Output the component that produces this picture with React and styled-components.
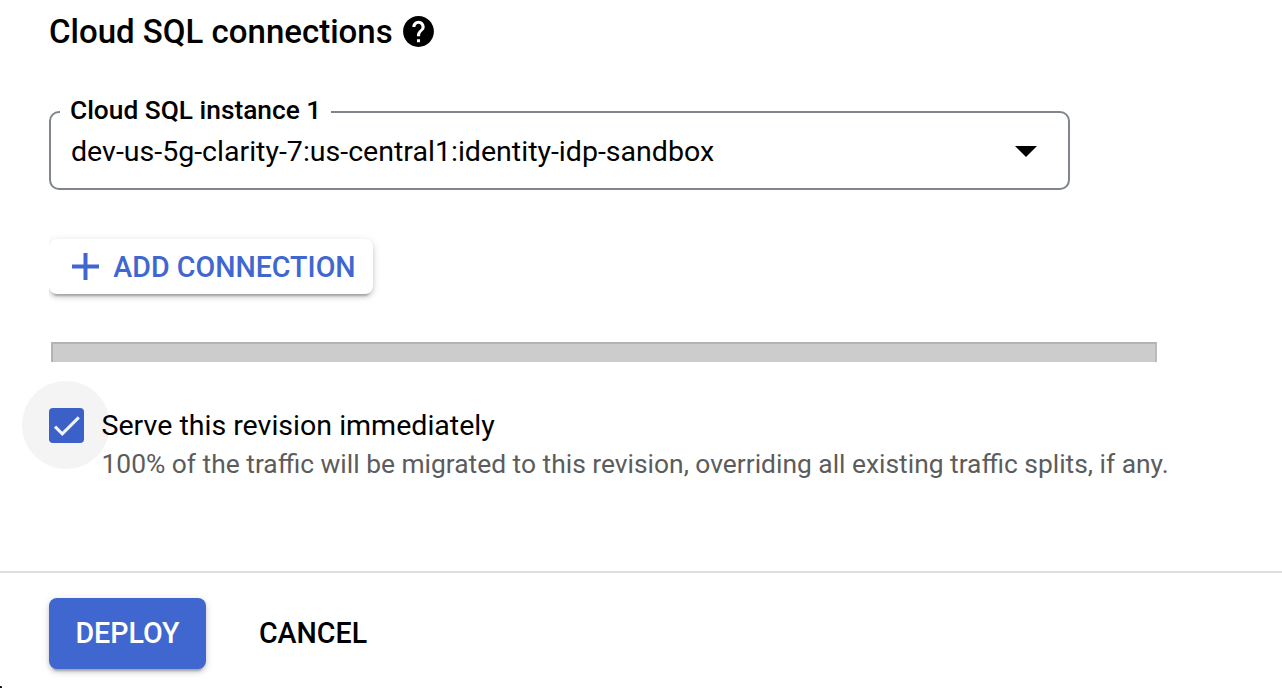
import React from "react";
import styled, { createGlobalStyle } from "styled-components";
import { MdHelp } from "react-icons/md";

const GlobalStyle = createGlobalStyle`
  *, *::before, *::after { box-sizing: border-box; }
  body {
    margin: 0;
    background: #fff;
    color: #000;
    font-family: Roboto, "Liberation Sans", sans-serif;
    overflow: hidden;
  }
  button { font-family: inherit; cursor: pointer; }
`;

const Page = styled.div`
  position: relative;
  display: flex;
  flex-direction: column;
  height: 688px;
  overflow: hidden;
`;

const Content = styled.main`
  flex: 1;
  display: flex;
  flex-direction: column;
  align-items: flex-start;
  padding: 12px 49px 0;
`;

const Heading = styled.h2`
  display: flex;
  align-items: center;
  gap: 7px;
  height: 40px;
  margin: 0;
  font-size: 33px;
  font-weight: 500;
  line-height: 40px;
  white-space: nowrap;
`;

const HelpIcon = styled(MdHelp)`
  width: 37px;
  height: 37px;
  margin-bottom: 1px;
`;

const SelectField = styled.fieldset`
  display: flex;
  align-items: center;
  justify-content: space-between;
  width: 1021px;
  height: 95px;
  min-width: 0;
  margin: 43px 0 0;
  padding: 0 31px 0 20px;
  border: 2px solid #80868b;
  border-radius: 10px;
`;

const FieldLabel = styled.legend`
  margin-left: -11px;
  padding: 0 10px 4px;
  font-size: 26.3px;
  font-weight: 500;
  line-height: 30px;
  white-space: nowrap;
`;

const FieldValue = styled.span`
  padding-top: 5px;
  font-size: 28.55px;
  line-height: 36px;
  white-space: nowrap;
`;

const Caret = styled.span`
  margin-top: 3px;
  border: 11px solid transparent;
  border-top-color: #000;
  border-bottom: 0;
`;

const ShadowClip = styled.div`
  overflow: hidden;
  margin-top: 39px;
  padding: 10px 12px 12px 0;
`;

const Button = styled.button`
  display: flex;
  align-items: center;
  justify-content: center;
  width: ${(p) => p.$width}px;
  height: ${(p) => p.$height}px;
  padding: ${(p) => p.$padding || "0 0 1px"};
  border: 0;
  border-radius: 8px;
  background: ${(p) => p.$background || "transparent"};
  box-shadow: ${(p) =>
    p.$raised
      ? "0 6px 2px -4px rgba(0,0,0,.2), 0 3px 4px rgba(0,0,0,.14), 0 2px 10px rgba(0,0,0,.12)"
      : "none"};
  color: ${(p) => p.$color};
  font-size: 28.6px;
  font-weight: 500;
  line-height: 36px;
  white-space: nowrap;
`;

const PlusIcon = styled.svg`
  width: 27px;
  height: 27px;
  margin-right: 14px;
`;

const AddLabel = styled.span`
  padding-top: 1px;
`;

const Divider = styled.div`
  width: 1106px;
  height: 20px;
  margin: 36px 0 0 2px;
  border: solid #b3b3b3;
  border-width: 2px 2px 0;
  border-right-color: #bababa;
  background: #ccc;
`;

const CheckRow = styled.label`
  display: flex;
  align-items: flex-start;
  gap: 17.5px;
  margin-top: 46px;
`;

const CheckBox = styled.span`
  position: relative;
  display: flex;
  width: 35px;
  height: 35px;
  border-radius: 4px;
  background: #3b60c8;

  &::before {
    content: "";
    position: absolute;
    z-index: -1;
    inset: -27px -26px -26px -27px;
    border-radius: 50%;
    background: #f4f4f4;
  }
`;

const CheckText = styled.span`
  display: flex;
  flex-direction: column;
  white-space: nowrap;
`;

const CheckTitle = styled.span`
  font-size: 28.55px;
  line-height: 36px;
`;

const CheckHint = styled.span`
  margin-top: 2px;
  color: #5c5c5c;
  font-size: 26.38px;
  line-height: 36px;
`;

const Footer = styled.footer`
  display: flex;
  align-items: flex-start;
  gap: 26px;
  height: 117px;
  padding: 25px 49px 0;
  border-top: 2px solid #e0e0e0;
`;

const CornerMark = styled.span`
  position: absolute;
  left: 0;
  bottom: 0;
  width: 2px;
  height: 2px;
  border-top-right-radius: 1px;
  background: #111;
`;

export default function App() {
  return (
    <Page>
      <GlobalStyle />
      <Content>
        <Heading>
          Cloud SQL connections
          <HelpIcon />
        </Heading>
        <SelectField>
          <FieldLabel>Cloud SQL instance 1</FieldLabel>
          <FieldValue>dev-us-5g-clarity-7:us-central1:identity-idp-sandbox</FieldValue>
          <Caret />
        </SelectField>
        <ShadowClip>
          <Button $width={324} $height={55} $padding="0 0 0 6px" $background="#fff" $color="#4067d0" $raised>
            <PlusIcon viewBox="0 0 27 27" fill="none" stroke="currentColor" strokeWidth="4">
              <path d="M13.5 0v27M0 13.5h27" />
            </PlusIcon>
            <AddLabel>ADD CONNECTION</AddLabel>
          </Button>
        </ShadowClip>
        <Divider />
        <CheckRow>
          <CheckBox>
            <svg width="35" height="35" viewBox="0 0 35 35" fill="none" stroke="#f4f4f4" strokeWidth="3">
              <path d="M6 18.6l7.3 7.3L29.8 9.4" />
            </svg>
          </CheckBox>
          <CheckText>
            <CheckTitle>Serve this revision immediately</CheckTitle>
            <CheckHint>
              100% of the traffic will be migrated to this revision, overriding all existing traffic splits, if any.
            </CheckHint>
          </CheckText>
        </CheckRow>
      </Content>
      <Footer>
        <Button $width={157} $height={71} $background="#4067d0" $color="#fff" $raised>
          DEPLOY
        </Button>
        <Button $width={162} $height={71} $color="#000">
          CANCEL
        </Button>
      </Footer>
      <CornerMark />
    </Page>
  );
}
